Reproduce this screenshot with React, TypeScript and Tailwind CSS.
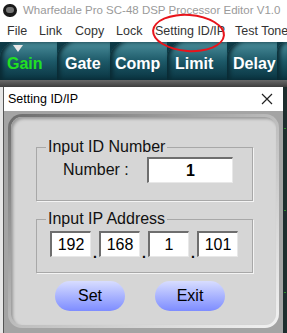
import { useState } from 'react'

const tabs = [
  { name: 'Gain', w: 'w-[57px]', pl: 'pl-[7px]', active: true },
  { name: 'Gate', w: 'w-[53px]', pl: 'pl-[8px]' },
  { name: 'Comp', w: 'w-[57px]', pl: 'pl-[5px]' },
  { name: 'Limit', w: 'w-[60px]', pl: 'pl-[8px]' },
  { name: 'Delay', w: 'w-[50px]', pl: 'pl-[6px]' },
]

const menu = [
  { name: 'File', w: 'w-[32px]' },
  { name: 'Link', w: 'w-[36px]' },
  { name: 'Copy', w: 'w-[41px]' },
  { name: 'Lock', w: 'w-[39px]' },
  { name: 'Setting ID/IP', w: 'w-[80px]' },
  { name: 'Test Tone', w: 'w-[52px]' },
]

const sans = { fontFamily: '"Liberation Sans", Arial, sans-serif' }

function Field({ value, className }: { value: string; className: string }) {
  return (
    <div
      className={`h-[26px] bg-white border-t-2 border-l-2 border-[#6e6e6e] border-r border-b border-r-[#e8e8e8] border-b-[#e8e8e8] flex items-center justify-center text-[16px] text-black ${className}`}
    >
      {value}
    </div>
  )
}

function PillButton({ title }: { title: string }) {
  return (
    <button className="w-[70px] h-[30px] rounded-full bg-gradient-to-b from-[#d8ddff] via-[#aab4ff] to-[#7e8cff] text-[16px] text-black leading-none">
      {title}
    </button>
  )
}

export default function App() {
  const [ip] = useState(['192', '168', '1', '101'])

  return (
    <div className="relative w-[287px] h-[333px] overflow-hidden bg-[#f0f0f0]" style={sans}>
      {/* window title */}
      <div className="h-[21px] bg-white flex items-center pl-[3px] gap-[6px] whitespace-nowrap">
        <div className="w-[14px] h-[13px] shrink-0 rounded-full bg-[#1a1a1a] flex items-center justify-center">
          <div className="w-[8px] h-[6px] rounded-full bg-[#777] mt-[-2px]" />
        </div>
        <span className="text-[11.5px] text-[#9a9a9a]">Wharfedale Pro SC-48 DSP Processor Editor V1.0</span>
      </div>

      {/* menu */}
      <div className="h-[21px] bg-white flex items-center pl-[7px] text-[12.5px] text-[#333] whitespace-nowrap">
        {menu.map((m) => (
          <span key={m.name} className={`${m.w} shrink-0`}>
            {m.name}
          </span>
        ))}
      </div>

      {/* tabs */}
      <div className="h-[38px] flex bg-[#0d3a46]">
        {tabs.map((t) => (
          <div
            key={t.name}
            className={`${t.w} ${t.pl} relative shrink-0 rounded-tl-[16px] bg-gradient-to-b from-[#4b8f9c] via-[#1d5a69] to-[#0a3441] shadow-[inset_3px_0_4px_#0a2a33] flex items-center pt-[5px]`}
          >
            {t.active && (
              <div className="absolute top-[3px] left-[13px] w-0 h-0 border-l-[5px] border-r-[5px] border-t-[7px] border-l-transparent border-r-transparent border-t-[#e8e8e8]" />
            )}
            <span className={`text-[16px] font-bold ${t.active ? 'text-[#22e022]' : 'text-white'}`}>
              {t.name}
            </span>
          </div>
        ))}
        <div className="flex-1 rounded-tl-[16px] bg-gradient-to-b from-[#4b8f9c] via-[#1d5a69] to-[#0a3441] shadow-[inset_3px_0_4px_#0a2a33]" />
      </div>
      <div className="h-[7px] bg-gradient-to-b from-[#6a6a6a] to-[#3e3e3e]" />

      {/* dialog */}
      <div className="flex h-[246px]">
        <div className="w-[3px] bg-[#e6e6e6]" />
        <div className="w-[280px] flex flex-col border-l border-[#555]">
          <div className="h-[24px] bg-white flex items-center justify-between pl-[4px] pr-[10px] text-[12.5px] text-black">
            <span>Setting ID/IP</span>
            <svg width="12" height="12" viewBox="0 0 12 12">
              <path d="M1 1L11 11M11 1L1 11" stroke="#222" strokeWidth="1.2" />
            </svg>
          </div>
          <div className="flex-1 bg-[#a4a4a4] px-[4px] pt-[3px] pb-[5px]">
            <div className="h-full rounded-[14px] bg-gradient-to-br from-[#6c6c6c] via-[#bdbdbd] to-[#f2f2f2] p-[3px]">
              <div className="h-full rounded-[11px] bg-[#d6d6d6] shadow-[inset_2px_2px_3px_#9a9a9a] flex flex-col items-start pt-[21px] pl-[25px]">
                {/* Input ID Number */}
                <fieldset className="w-[217px] h-[63px] border border-[#a8a8a8] shadow-[1px_1px_0_#f4f4f4] p-0">
                  <legend className="ml-[9px] px-[2px] text-[16px] text-[#111] leading-[18px]">Input ID Number</legend>
                  <div className="flex items-center mt-[1px]">
                    <span className="text-[16px] text-[#111] w-[110px] pl-[26px]">Number :</span>
                    <Field value="1" className="w-[86px] font-bold" />
                  </div>
                </fieldset>

                {/* Input IP Address */}
                <fieldset className="w-[217px] h-[63px] border border-[#a8a8a8] shadow-[1px_1px_0_#f4f4f4] mt-[9px] p-0 pl-[13px]">
                  <legend className="ml-[-4px] px-[2px] text-[16px] text-[#111] leading-[18px]">Input IP Address</legend>
                  <div className="flex items-end mt-[3px]">
                    {ip.map((p, i) => (
                      <div key={i} className="flex items-end">
                        <Field value={p} className="w-[41px]" />
                        {i < 3 && <span className="w-[8px] text-center text-[14px] font-bold leading-[8px] text-black">.</span>}
                      </div>
                    ))}
                  </div>
                </fieldset>

                <div className="flex gap-[30px] mt-[8px] ml-[19px]">
                  <PillButton title="Set" />
                  <PillButton title="Exit" />
                </div>
              </div>
            </div>
          </div>
        </div>
        <div className="flex-1 bg-[#1e2e2e] flex flex-col justify-around items-end pr-[1px]">
          <div className="w-[2px] h-[1px] bg-[#2d8a2d]" />
          <div className="w-[2px] h-[1px] bg-[#2d8a2d]" />
          <div className="w-[2px] h-[1px] bg-[#2d8a2d]" />
        </div>
      </div>

      {/* red annotation ellipse */}
      <div className="absolute left-[152px] top-[14px] w-[73px] h-[38px] rounded-[50%] border-2 border-[#e8141b] rotate-[4deg]" />
    </div>
  )
}
